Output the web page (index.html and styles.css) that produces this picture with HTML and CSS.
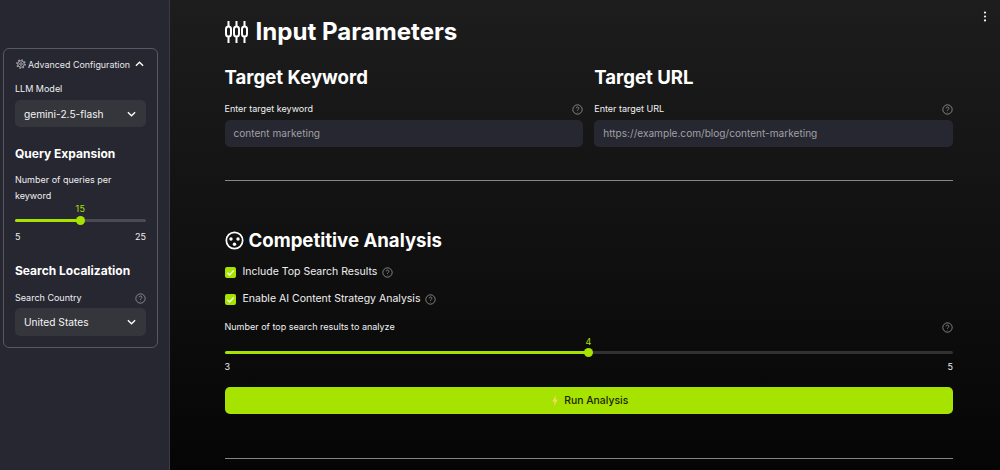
FILE: index.html
```html
<!DOCTYPE html>
<html lang="en">
<head>
<meta charset="utf-8">
<title>Input Parameters</title>
<link rel="stylesheet" href="styles.css">
</head>
<body>
<div class="app">
  <aside class="sidebar">
    <section class="panel">
      <div class="expander-head">
        <svg class="gear" viewBox="0 0 20 20"><circle cx="10" cy="10" r="6.5"/><circle class="teeth" cx="10" cy="10" r="8.2"/><circle cx="10" cy="10" r="2.5"/></svg><span>Advanced Configuration</span>
        <svg class="chev up" viewBox="0 0 10 6"><path d="M1 5l4-4 4 4"/></svg>
      </div>
      <div class="side-label">LLM Model</div>
      <div class="select"><span>gemini-2.5-flash</span><svg class="chev" viewBox="0 0 10 6"><path d="M1 1l4 4 4-4"/></svg></div>
      <h3 class="side-h first">Query Expansion</h3>
      <div class="side-label wrap">Number of queries per keyword</div>
      <div class="slider side-slider">
        <div class="val" style="left:50%">15</div>
        <div class="track"><div class="fill" style="width:50%"></div><div class="thumb" style="left:50%"></div></div>
      </div>
      <div class="range"><span>5</span><span>25</span></div>
      <h3 class="side-h second">Search Localization</h3>
      <div class="side-label between"><span>Search Country</span>
        <svg class="help" viewBox="0 0 16 16"><circle cx="8" cy="8" r="6.8"/><path d="M6 6.3a2 2 0 1 1 3 1.8c-.7.4-1 .8-1 1.6"/><path d="M8 11.6v.5"/></svg>
      </div>
      <div class="select"><span>United States</span><svg class="chev" viewBox="0 0 10 6"><path d="M1 1l4 4 4-4"/></svg></div>
    </section>
  </aside>
  <main class="main">
    <svg class="kebab" viewBox="0 0 4 14"><circle cx="2" cy="2" r="1.4"/><circle cx="2" cy="7" r="1.4"/><circle cx="2" cy="12" r="1.4"/></svg>
    <h1 class="h1">
      <svg class="ic-sliders" viewBox="0 0 24 24"><path d="M3.5 1v22M11.5 1v22M19.5 1v22"/><rect x="1" y="6.5" width="5" height="10" rx="2.5"/><rect x="9" y="6.5" width="5" height="10" rx="2.5"/><rect x="17" y="6.5" width="5" height="10" rx="2.5"/></svg>
      Input Parameters
    </h1>
    <div class="cols">
      <div class="col">
        <h2 class="h2">Target Keyword</h2>
        <div class="field-label"><span>Enter target keyword</span><svg class="help" viewBox="0 0 16 16"><circle cx="8" cy="8" r="6.8"/><path d="M6 6.3a2 2 0 1 1 3 1.8c-.7.4-1 .8-1 1.6"/><path d="M8 11.6v.5"/></svg></div>
        <div class="input">content marketing</div>
      </div>
      <div class="col">
        <h2 class="h2">Target URL</h2>
        <div class="field-label"><span>Enter target URL</span><svg class="help" viewBox="0 0 16 16"><circle cx="8" cy="8" r="6.8"/><path d="M6 6.3a2 2 0 1 1 3 1.8c-.7.4-1 .8-1 1.6"/><path d="M8 11.6v.5"/></svg></div>
        <div class="input">https://example.com/blog/content-marketing</div>
      </div>
    </div>
    <hr class="rule first-rule">
    <h2 class="h-comp">
      <svg class="ic-comp" viewBox="0 0 20 20"><circle cx="10" cy="10" r="8.6"/><circle class="dot" cx="6.3" cy="8.4" r="1.8"/><circle class="dot" cx="13.7" cy="8.4" r="1.8"/><circle class="dot" cx="10" cy="14" r="1.8"/></svg>
      Competitive Analysis
    </h2>
    <div class="check"><span class="box"><svg viewBox="0 0 12 12"><path d="M2.5 6.2l2.5 2.5 4.5-5"/></svg></span><span>Include Top Search Results</span><svg class="help" viewBox="0 0 16 16"><circle cx="8" cy="8" r="6.8"/><path d="M6 6.3a2 2 0 1 1 3 1.8c-.7.4-1 .8-1 1.6"/><path d="M8 11.6v.5"/></svg></div>
    <div class="check"><span class="box"><svg viewBox="0 0 12 12"><path d="M2.5 6.2l2.5 2.5 4.5-5"/></svg></span><span>Enable AI Content Strategy Analysis</span><svg class="help" viewBox="0 0 16 16"><circle cx="8" cy="8" r="6.8"/><path d="M6 6.3a2 2 0 1 1 3 1.8c-.7.4-1 .8-1 1.6"/><path d="M8 11.6v.5"/></svg></div>
    <div class="field-label slider-label"><span>Number of top search results to analyze</span><svg class="help" viewBox="0 0 16 16"><circle cx="8" cy="8" r="6.8"/><path d="M6 6.3a2 2 0 1 1 3 1.8c-.7.4-1 .8-1 1.6"/><path d="M8 11.6v.5"/></svg></div>
    <div class="slider main-slider">
      <div class="val" style="left:50%">4</div>
      <div class="track"><div class="fill" style="width:50%"></div><div class="thumb" style="left:50%"></div></div>
    </div>
    <div class="range main-range"><span>3</span><span>5</span></div>
    <button class="run"><svg class="bolt" viewBox="0 0 8 12"><path d="M5 0L1 7h2.5L3 12l4-7H4.5z"/></svg><span>Run Analysis</span></button>
    <hr class="rule last-rule">
  </main>
</div>
</body>
</html>
```
FILE: styles.css
```css
* { box-sizing: border-box; }
html, body { margin: 0; height: 470px; overflow: hidden; }
body { font-family: Inter, "Liberation Sans", sans-serif; color: #fff; background: #111; }
.app { display: flex; height: 470px; }
.sidebar { width: 170px; flex: none; background: #262730; border-right: 1px solid #3a3b44; padding: 48px 12px 0 3px; }
.panel { width: 155px; height: 300px; border: 1px solid #565862; border-radius: 6px; padding: 7px 11px 0; }
.expander-head { display: flex; align-items: center; font-size: 8.9px; height: 16px; color: #e8e8ea; white-space: nowrap; }
.gear { width: 10px; height: 10px; fill: none; stroke: #a8a8ac; stroke-width: 2; flex: none; margin: 0 2px 0 1px; }
.gear .teeth { stroke-width: 3; stroke-dasharray: 3 3.4; }
.chev { width: 9px; height: 6px; fill: none; stroke: #fff; stroke-width: 1.5; flex: none; }
.expander-head .chev { margin-left: 5px; }
.side-label { font-size: 9px; color: #f0f0f2; line-height: 14px; margin-top: 10px; }
.side-label.wrap { line-height: 16px; margin-top: 10px; width: 120px; }
.between { display: flex; justify-content: space-between; align-items: center; margin-top: 12px; }
.select { height: 27px; background: #35363c; border-radius: 5px; display: flex; align-items: center; justify-content: space-between; padding: 0 10px 0 9px; font-size: 10.2px; color: #f5f5f5; margin-top: 4px; }
.between + .select { height: 28px; margin-top: 3px; }
.side-h { font-size: 12px; font-weight: 700; margin: 0; line-height: 16px; color: #fff; }
.side-h.first { margin-top: 19px; }
.side-h.second { margin-top: 20px; }
.help { width: 11px; height: 11px; fill: none; stroke: #a5a5a8; stroke-width: 1.1; flex: none; }
.slider { position: relative; }
.side-slider { height: 21px; margin-top: -1px; }
.val { position: absolute; top: 0; transform: translateX(-50%); font-size: 9px; line-height: 11px; letter-spacing: .5px; color: #a6e300; }
.track { position: absolute; left: 0; right: 0; bottom: 2px; height: 3px; background: #4a4b52; border-radius: 2px; }
.main-slider .track { background: #303033; }
.fill { height: 100%; background: #a6e300; border-radius: 2px; }
.thumb { position: absolute; top: 50%; width: 9px; height: 9px; margin: -4.5px 0 0 -4.5px; background: #a6e300; border-radius: 50%; }
.range { display: flex; justify-content: space-between; font-size: 9px; line-height: 12px; color: #eee; margin-top: 7px; }
.main { position: relative; flex: 1; padding: 0 47px 0 54.5px; background: linear-gradient(180deg, #1d1d1d 0%, #050505 100%); }
.kebab { position: absolute; top: 11px; right: 13px; width: 4px; height: 11px; fill: #f0f0f0; }
.h1 { font-size: 24.1px; font-weight: 700; line-height: 28px; margin: 18px 0 0; display: flex; align-items: center; gap: 7px; white-space: nowrap; }
.ic-sliders { width: 24px; height: 24px; fill: #1b1b1b; stroke: #fff; stroke-width: 2; }
.cols { display: flex; gap: 11px; margin-top: 19px; }
.col { flex: 1; min-width: 0; }
.h2 { font-size: 18.6px; font-weight: 700; line-height: 24px; margin: 0; }
.field-label { display: flex; justify-content: space-between; align-items: center; font-size: 9px; line-height: 14px; color: #f0f0f2; }
.col .field-label { margin-top: 13px; }
.input { height: 27px; margin-top: 4px; background: #262730; border-radius: 5px; font-size: 10.1px; line-height: 27px; padding-left: 9px; color: #a0a0a4; }
.rule { border: 0; height: 1px; background: #84858a; margin: 0; }
.first-rule { margin-top: 33px; }
.h-comp { font-size: 18.6px; font-weight: 700; line-height: 22px; margin: 48px 0 0; display: flex; align-items: center; gap: 5px; }
.ic-comp { width: 19px; height: 19px; fill: none; stroke: #fff; stroke-width: 1.8; flex: none; }
.ic-comp .dot { fill: #fff; stroke: none; }
.check { display: flex; align-items: center; font-size: 10.5px; line-height: 14px; color: #f0f0f2; margin-top: 13px; gap: 6px; height: 14px; }
.h-comp + .check { margin-top: 14px; }
.box { width: 11px; height: 11px; background: #a6e300; border-radius: 2px; display: flex; align-items: center; justify-content: center; margin-right: 1px; }
.box svg { width: 11px; height: 11px; fill: none; stroke: #f2f8dc; stroke-width: 1.6; }
.check .help { margin-left: -1px; }
.slider-label { margin-top: 14px; }
.main-slider { height: 20px; margin-top: 2px; }
.main-range { margin-top: 5px; }
.run { display: flex; align-items: center; justify-content: center; gap: 5px; width: 100%; height: 27px; margin-top: 14px; padding: 0 0 0 2px; background: #a6e300; border: 0; border-radius: 5px; font: 500 10.4px Inter, sans-serif; color: #1c2300; }
.bolt { width: 8px; height: 11px; fill: #f0dd55; }
.last-rule { margin-top: 44px; }
```
